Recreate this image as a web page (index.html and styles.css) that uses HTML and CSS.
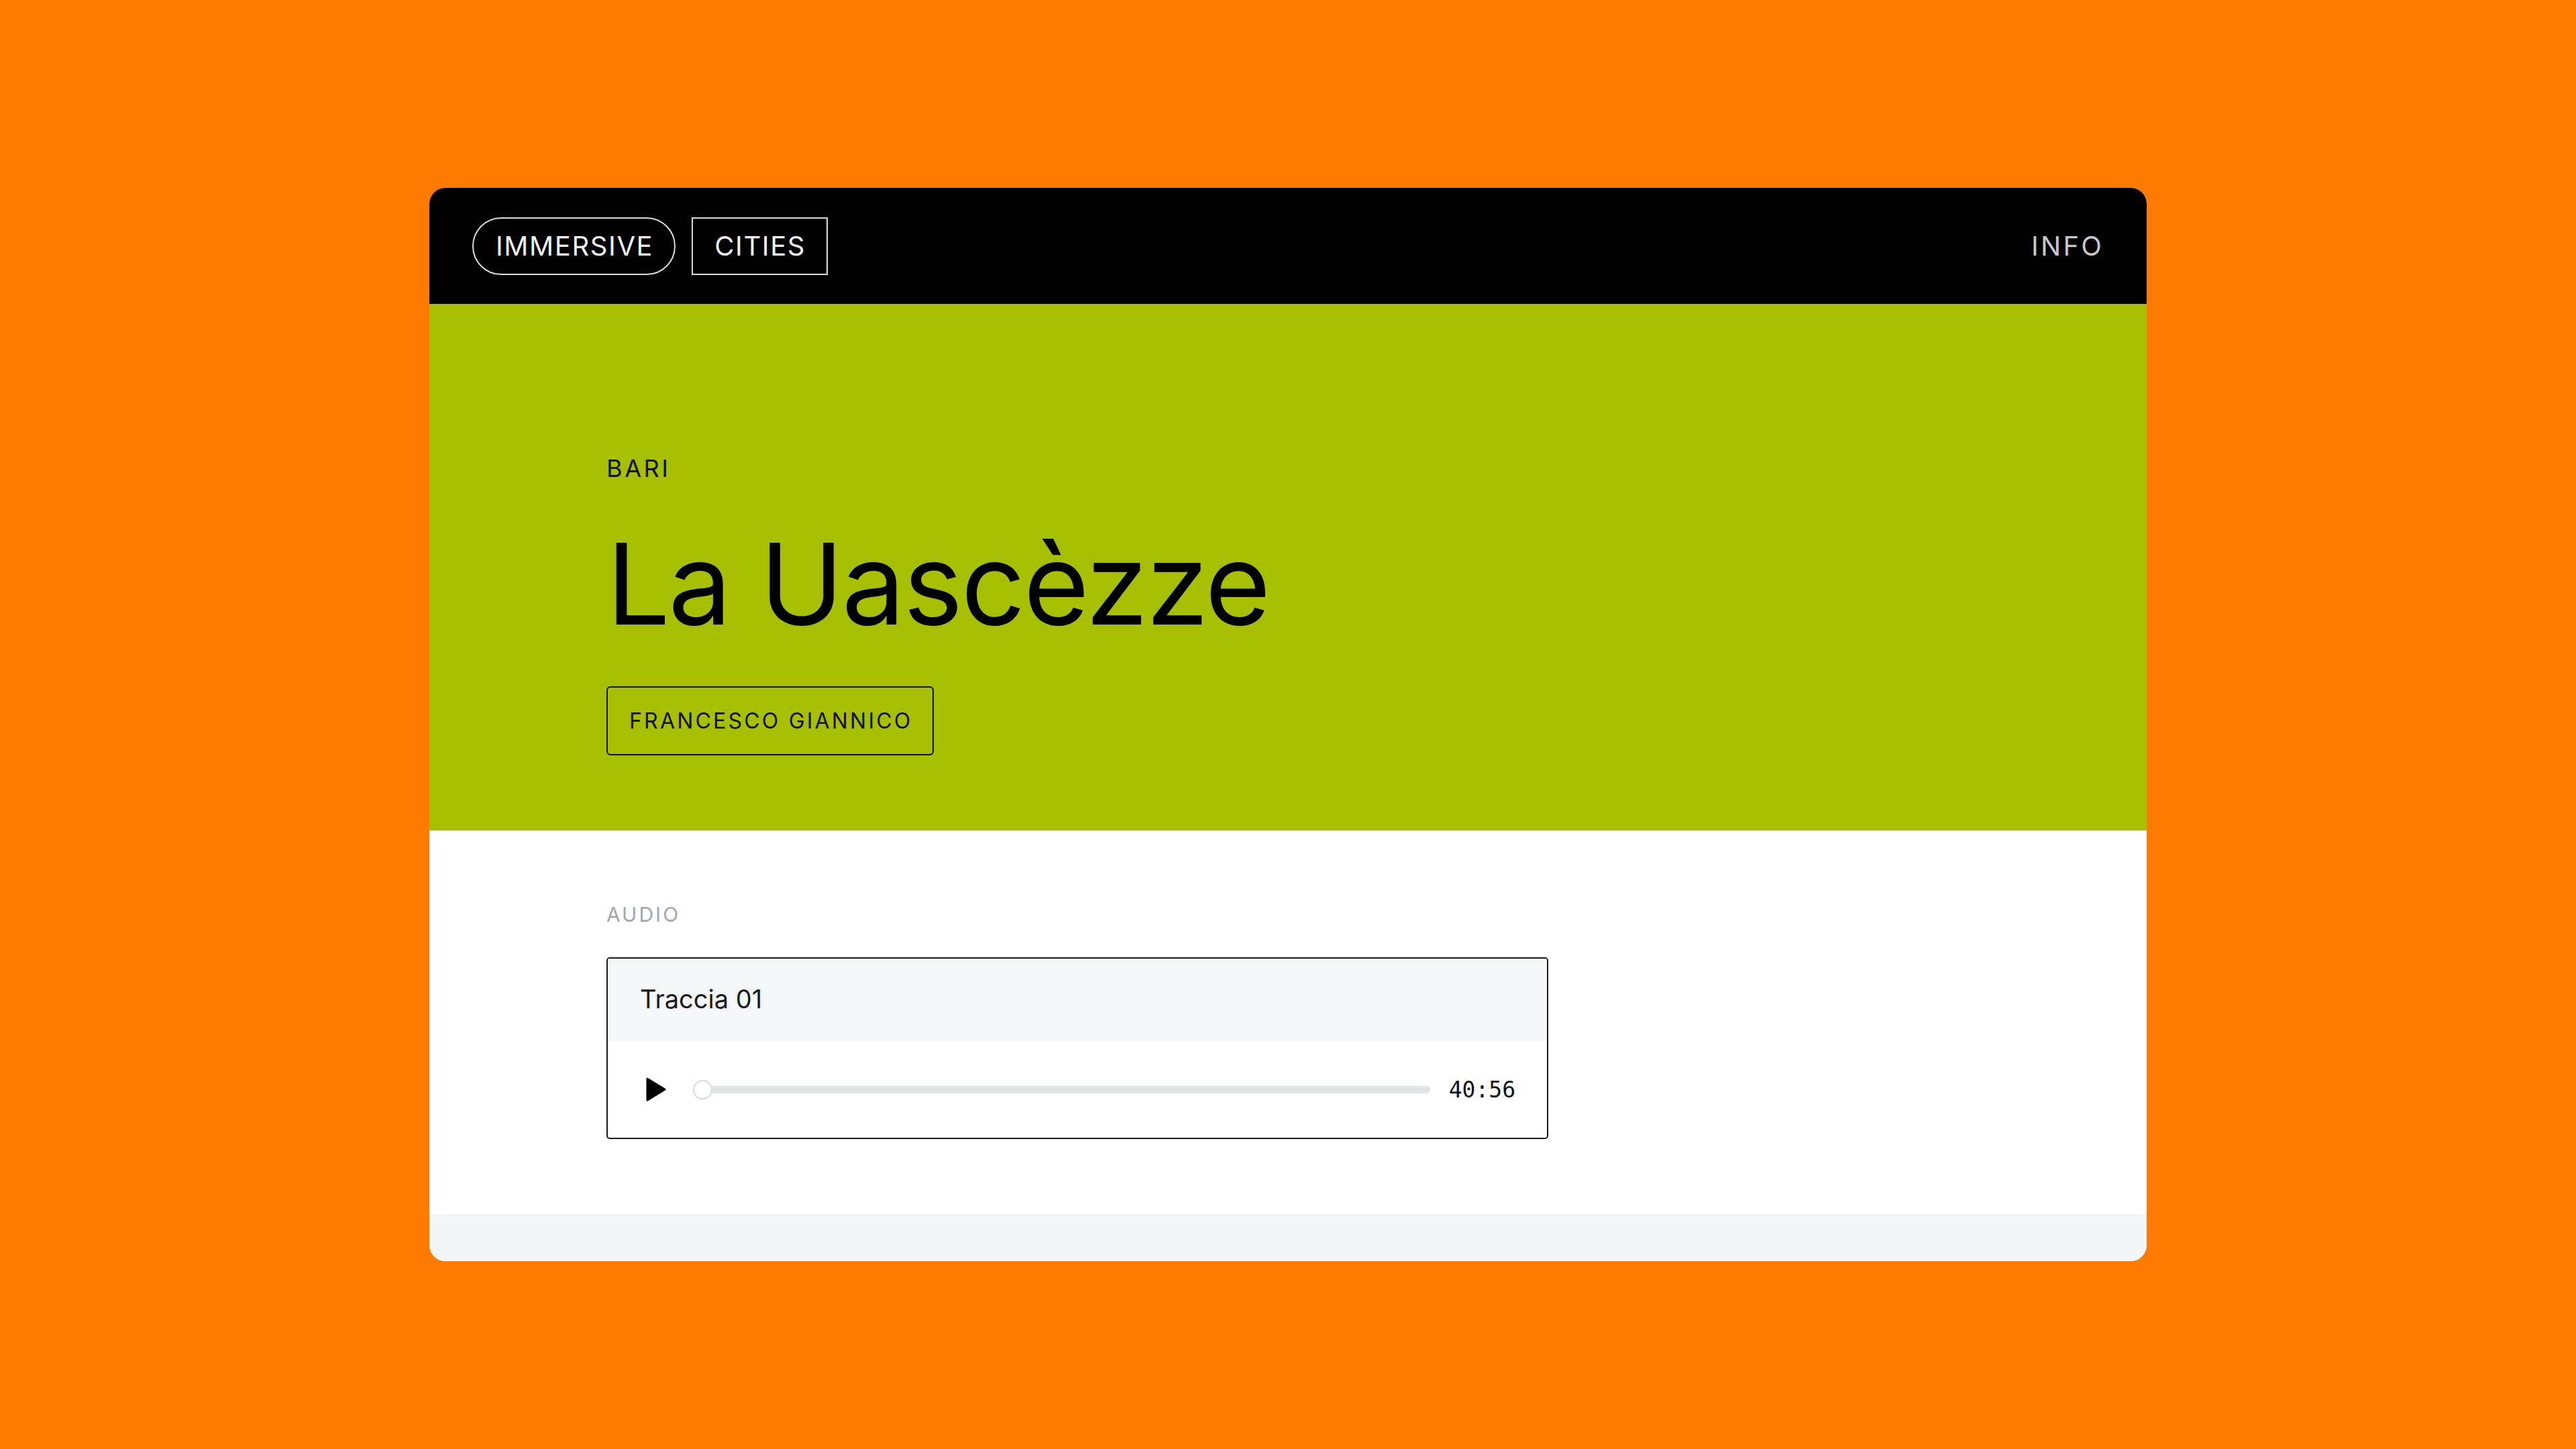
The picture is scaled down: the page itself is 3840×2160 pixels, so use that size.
FILE: index.html
```html
<!DOCTYPE html>
<html lang="it">
<head>
    <meta charset="UTF-8">
    <meta name="viewport" content="width=device-width, initial-scale=1.0">
    <title>La Uascèzze - Immersive Cities</title>
    <link rel="stylesheet" href="styles.css">
</head>
<body>

    <main class="page">
        <div class="card">

            <header class="topbar">
                <nav class="nav">
                    <a class="nav-pill" href="#">IMMERSIVE</a>
                    <a class="nav-box" href="#">CITIES</a>
                </nav>
                <a class="info" href="#">INFO</a>
            </header>

            <section class="hero">
                <p class="city">BARI</p>
                <h1 class="title">La Uascèzze</h1>
                <a class="author" href="#">FRANCESCO GIANNICO</a>
            </section>

            <section class="media">
                <p class="label">AUDIO</p>

                <div class="track">
                    <div class="track-head">Traccia 01</div>
                    <div class="player">
                        <button class="play" aria-label="Play">
                            <svg width="30" height="36" viewBox="0 0 30 36">
                                <path d="M2 2 L28 18 L2 34 Z" fill="#000" stroke="#000" stroke-width="3" stroke-linejoin="round"/>
                            </svg>
                        </button>
                        <div class="bar">
                            <span class="knob"></span>
                        </div>
                        <span class="time">40:56</span>
                    </div>
                </div>
            </section>

            <footer class="card-foot"></footer>

        </div>
    </main>

</body>
</html>
```

FILE: styles.css
```css
body {
    margin: 0;
    padding: 0;
    background-color: #ff7a00;
    font-family: Inter, "Noto Sans", sans-serif;
}

.page {
    display: flex;
    justify-content: center;
    padding-top: 280px;
    min-height: 100vh;
    box-sizing: border-box;
}

.card {
    width: 2560px;
    border-radius: 24px;
    overflow: hidden;
    background-color: #fff;
    display: flex;
    flex-direction: column;
    align-self: flex-start;
}

/* top bar */

.topbar {
    background-color: #000;
    height: 173px;
    padding: 0 64px;
    display: flex;
    align-items: center;
    justify-content: space-between;
}

.nav {
    display: flex;
    gap: 24px;
}

.nav-pill,
.nav-box {
    display: flex;
    align-items: center;
    height: 86px;
    box-sizing: border-box;
    border: 2px solid #dcdcdc;
    color: #f2f2f2;
    font-size: 40px;
    line-height: 1;
    letter-spacing: 0.04em;
    text-decoration: none;
}

.nav-pill {
    border-radius: 43px;
    padding: 0 31px 0 33px;
}

.nav-box {
    padding: 0 31px 0 32px;
}

.info {
    color: #c8c8c8;
    font-size: 40px;
    line-height: 1;
    letter-spacing: 0.08em;
    text-decoration: none;
}

/* hero */

.hero {
    background-color: #a7bf00;
    padding: 227px 264px 112px;
    display: flex;
    flex-direction: column;
    align-items: flex-start;
}

.city {
    margin: 0;
    font-size: 36px;
    line-height: 1;
    letter-spacing: 0.1em;
    color: #111;
}

.title {
    margin: 70px 0 0;
    font-size: 168px;
    font-weight: 400;
    line-height: 1;
    letter-spacing: -0.016em;
    color: #000;
}

.author {
    margin-top: 69px;
    display: flex;
    align-items: center;
    height: 103px;
    box-sizing: border-box;
    padding: 0 30px 0 32px;
    border: 2px solid #111;
    border-radius: 6px;
    font-size: 32px;
    line-height: 1;
    letter-spacing: 0.1em;
    color: #111;
    text-decoration: none;
}

/* audio */

.media {
    padding: 110px 264px 112px;
}

.label {
    margin: 0 0 49px;
    font-size: 30px;
    line-height: 1;
    letter-spacing: 0.1em;
    color: #a3a7ad;
}

.track {
    width: 1400px;
    border: 2px solid #1a1a1a;
    border-radius: 5px;
    overflow: hidden;
}

.track-head {
    background-color: #f4f7f8;
    padding: 41px 48px 44px;
    font-size: 38px;
    line-height: 1;
    color: #1a1a1a;
}

.player {
    height: 144px;
    padding: 0 49px 0 57px;
    display: flex;
    align-items: center;
}

.play {
    background: none;
    border: none;
    padding: 0;
    margin-right: 40px;
    display: flex;
    cursor: pointer;
}

.bar {
    flex: 1;
    height: 11px;
    border-radius: 6px;
    background-color: #e3e4e6;
    position: relative;
}

.knob {
    position: absolute;
    left: 0;
    top: 50%;
    width: 29px;
    height: 29px;
    margin-top: -14px;
    box-sizing: border-box;
    border: 2px solid #dadbdd;
    border-radius: 50%;
    background-color: #fff;
}

.time {
    margin-left: 28px;
    margin-right: -2px;
    font-family: "DejaVu Sans Mono", "Liberation Mono", monospace;
    font-size: 33px;
    color: #111;
}

.card-foot {
    height: 70px;
    background-color: #f3f6f7;
}
```
